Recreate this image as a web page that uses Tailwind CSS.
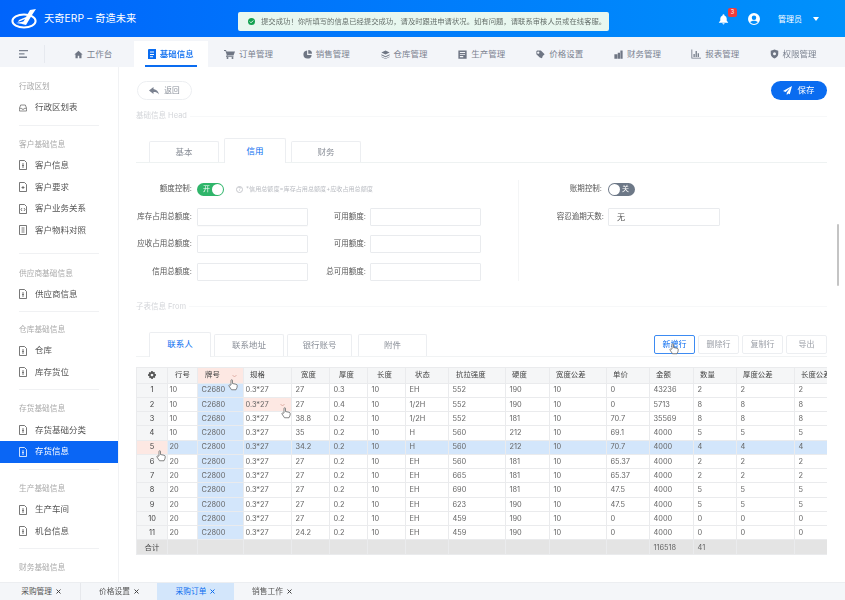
<!DOCTYPE html>
<html lang="zh">
<head>
<meta charset="utf-8">
<title>天奇ERP</title>
<script src="https://cdn.jsdelivr.net/npm/@tailwindcss/browser@4"></script>
</head>
<body class="bg-white">
<div class="relative w-[845px] h-[600px] overflow-hidden flex flex-col blur-[0.3px] font-['Inter','Noto_Sans_CJK_SC',sans-serif] text-[#555]">

  <!-- header -->
  <header class="h-[37px] shrink-0 flex items-center bg-gradient-to-r from-[#0064fb] to-[#0091fb] text-white">
    <svg class="ml-[11px] w-[26px] h-[20px]" viewBox="0 0 26 20" fill="none">
      <ellipse cx="13" cy="12" rx="11.6" ry="6.6" stroke="white" stroke-width="2"/>
      <path d="M19 1 L25 0 L21 6 L15 16 L11 15 L14 10 L7 13 L8 11 L15 8 Z" fill="white"/>
      <path d="M5 14 L15 12 L12 15 Z" fill="white"/>
    </svg>
    <span class="ml-[7px] text-[10.2px] tracking-[0.1px]">天奇ERP – 奇造未来</span>
    <div class="ml-auto flex items-center">
      <svg class="w-[11px] h-[12px]" viewBox="0 0 24 24" fill="white"><path d="M12 1.5a2 2 0 0 0-2 2v.6A7 7 0 0 0 5 11v5l-3 3v1h20v-1l-3-3v-5a7 7 0 0 0-5-6.900V3.500a2 2 0 0 0-2-2zM9.500 21.500a2.500 2.500 0 0 0 5 0z"/></svg>
      <svg class="ml-[19px] w-[12px] h-[12px]" viewBox="0 0 24 24" fill="white"><path d="M12 0a12 12 0 1 0 0 24 12 12 0 0 0 0-24zm0 5a4.500 4.500 0 1 1 0 9 4.500 4.500 0 0 1 0-9zm0 17a9.800 9.800 0 0 1-7.500-3.500c1.200-2 4.300-3 7.500-3s6.300 1 7.500 3A9.800 9.800 0 0 1 12 22z"/></svg>
      <span class="ml-[18px] text-[8px]">管理员</span>
      <span class="ml-[11px] mr-[26px] w-0 h-0 border-x-[3.5px] border-x-transparent border-t-[4px] border-t-white"></span>
    </div>
  </header>

  <!-- nav -->
  <nav class="h-[30px] shrink-0 flex bg-[#f3f5f9] text-[8.5px] text-[#7b8290]">
    <div class="w-[45px] h-[18px] mt-[8px] flex items-center justify-center border-r border-[#e6e9ef] pl-[3px]">
      <svg class="w-[9px] h-[8px]" viewBox="0 0 9 8" fill="#7b8290"><path d="M0 0h9v1.300H0zM0 3.300h5.500v1.300H0zM0 6.600h8v1.300H0z"/></svg>
    </div>
    <div class="ml-[9px] flex pt-[4px]">
      <a class="w-[77.800px] flex items-center justify-center gap-[4px]"><svg class="w-[9px] h-[9px]" viewBox="0 0 24 24" fill="#6f7684"><path d="M12 2 1 12h3v10h6v-7h4v7h6V12h3z"/></svg>工作台</a>
      <a class="relative w-[74px] mx-[1.900px] bg-white flex items-center justify-center gap-[4px] text-[#0a6cf0] font-medium"><svg class="w-[8px] h-[10px]" viewBox="0 0 8 10" fill="#0a6cf0"><path fill-rule="evenodd" d="M1 0h7v10H0V1a1 1 0 0 1 1-1zm1 2.500v1h4v-1zm0 2.500v1h4V5zm0 2.300v.9h3v-.9z"/></svg>基础信息<span class="absolute left-[11px] right-[11px] bottom-0 h-[2px] bg-[#0a6cf0]"></span></a>
      <a class="w-[77.800px] flex items-center justify-center gap-[4px]"><svg class="w-[11px] h-[9px]" viewBox="0 0 22 18" fill="#6f7684"><path d="M0 0h4l1 3h17l-3 8H7l-.5 1.500H19V14H4l1.500-4L3 2H0z"/><circle cx="7" cy="16" r="2"/><circle cx="17" cy="16" r="2"/></svg>订单管理</a>
      <a class="w-[77.800px] flex items-center justify-center gap-[4px]"><svg class="w-[9px] h-[9px]" viewBox="0 0 24 24" fill="#6f7684"><path d="M11 1a11 11 0 1 0 12 12H11z"/><path d="M14 0v10h10A10 10 0 0 0 14 0z"/></svg>销售管理</a>
      <a class="w-[77.800px] flex items-center justify-center gap-[4px]"><svg class="w-[9px] h-[9px]" viewBox="0 0 24 24" fill="#6f7684"><path d="M12 1 1 6.500 12 12l11-5.500zM1 11l11 5.500L23 11v3l-11 5.500L1 14zM1 17l11 5.500L23 17v1.500L12 24 1 18.500z"/></svg>仓库管理</a>
      <a class="w-[77.800px] flex items-center justify-center gap-[4px]"><svg class="w-[9px] h-[9px]" viewBox="0 0 24 24" fill="#6f7684"><path fill-rule="evenodd" d="M1 1h22v22H1zm4 4v3h14V5zm0 6v2h14v-2zm0 5v3h9v-3z"/></svg>生产管理</a>
      <a class="w-[77.800px] flex items-center justify-center gap-[4px]"><svg class="w-[9px] h-[9px]" viewBox="0 0 24 24" fill="#6f7684"><path fill-rule="evenodd" d="M3 1h10l10 10-5 5-2 6-6-2L1 11V3zm3 3a3 3 0 1 0 .010 0z"/></svg>价格设置</a>
      <a class="w-[77.800px] flex items-center justify-center gap-[4px]"><svg class="w-[9px] h-[9px]" viewBox="0 0 24 24" fill="#6f7684"><path d="M1 11h8v12H1zM10 7h6v16h-6zM17 1h6v22h-6z"/></svg>财务管理</a>
      <a class="w-[77.800px] flex items-center justify-center gap-[4px]"><svg class="w-[10px] h-[10px]" viewBox="0 0 24 24" fill="#6f7684"><path d="M1 1h2v20h21v2H1zM6 12h3v7H6zM11 5h3v14h-3zM16 10h3v9h-3z"/></svg>报表管理</a>
      <a class="w-[77.800px] flex items-center justify-center gap-[4px]"><svg class="w-[9px] h-[10px]" viewBox="0 0 24 24" fill="#6f7684"><path fill-rule="evenodd" d="M12 0 2 3v9c0 6 5 10 10 12 5-2 10-6 10-12V3zm0 7a4 4 0 1 1 0 8 4 4 0 0 1 0-8z"/></svg>权限管理</a>
    </div>
  </nav>

  <!-- body -->
  <div class="flex-1 min-h-0 flex">
    <!-- sidebar -->
    <aside class="w-[119px] shrink-0 border-r border-[#f1f2f4] overflow-hidden text-[8.5px] text-[#555] pt-[10px]">
      <div class="h-[20px] pl-[19px] flex items-center text-[7.700px] text-[#aaa]">行政区划</div>
      <a class="h-[21.600px] pl-[19px] flex items-center gap-[8px]"><svg class="w-[8px] h-[8px]" viewBox="0 0 12 12" fill="none" stroke="#555"><path d="M.6 6.500 2.500 1.500h7l1.900 5V10.500H.6zM.6 6.500h3.200l.7 1.300h3l.7-1.300h3.200"/></svg>行政区划表</a>
      <div class="mx-[19px] mt-[6px] mb-[9px] h-px bg-[#f0f1f3]"></div>

      <div class="h-[20px] pl-[19px] flex items-center text-[7.700px] text-[#aaa]">客户基础信息</div>
      <a class="h-[21.600px] pl-[19px] flex items-center gap-[8px]"><svg class="w-[8px] h-[10px]" viewBox="0 0 8 10" fill="none" stroke="#555" stroke-width=".8"><path d="M.5.500h5l2 2v7h-7zM3 4h2M3 5.500h2M3 7h2"/></svg>客户信息</a>
      <a class="h-[21.600px] pl-[19px] flex items-center gap-[8px]"><svg class="w-[8px] h-[10px]" viewBox="0 0 8 10" fill="none" stroke="#555" stroke-width=".8"><path d="M.5.500h5l2 2v7h-7zM4 4v3M2.500 5.500h3"/></svg>客户要求</a>
      <a class="h-[21.600px] pl-[19px] flex items-center gap-[8px]"><svg class="w-[8px] h-[10px]" viewBox="0 0 8 10" fill="none" stroke="#555" stroke-width=".8"><path d="M.5.500h5l2 2v7h-7zM3 4 2 5.500 3 7M5 4l1 1.500L5 7"/></svg>客户业务关系</a>
      <a class="h-[21.600px] pl-[19px] flex items-center gap-[8px]"><svg class="w-[8px] h-[10px]" viewBox="0 0 8 10" fill="none" stroke="#555" stroke-width=".8"><path d="M.5.500h7v9h-7zM2.500 3h3M2.500 5h3M2.500 7h3"/></svg>客户物料对照</a>
      <div class="mx-[19px] mt-[12px] mb-[9.500px] h-px bg-[#f0f1f3]"></div>

      <div class="h-[20px] pl-[19px] flex items-center text-[7.700px] text-[#aaa]">供应商基础信息</div>
      <a class="h-[21.600px] pl-[19px] flex items-center gap-[8px]"><svg class="w-[8px] h-[10px]" viewBox="0 0 8 10" fill="none" stroke="#555" stroke-width=".8"><path d="M.5.500h5l2 2v7h-7zM3 4h2M3 5.500h2M3 7h2"/></svg>供应商信息</a>
      <div class="mx-[19px] mt-[6px] mb-[8px] h-px bg-[#f0f1f3]"></div>

      <div class="h-[20px] pl-[19px] flex items-center text-[7.700px] text-[#aaa]">仓库基础信息</div>
      <a class="h-[21.600px] pl-[19px] flex items-center gap-[8px]"><svg class="w-[8px] h-[10px]" viewBox="0 0 8 10" fill="none" stroke="#555" stroke-width=".8"><path d="M.5.500h5l2 2v7h-7zM3 4h2M3 5.500h2M3 7h2"/></svg>仓库</a>
      <a class="h-[21.600px] pl-[19px] flex items-center gap-[8px]"><svg class="w-[8px] h-[10px]" viewBox="0 0 8 10" fill="none" stroke="#555" stroke-width=".8"><path d="M.5.500h5l2 2v7h-7zM3 4h2M3 5.500h2M3 7h2"/></svg>库存货位</a>
      <div class="mx-[19px] mt-[6px] mb-[9px] h-px bg-[#f0f1f3]"></div>

      <div class="h-[20px] pl-[19px] flex items-center text-[7.700px] text-[#aaa]">存货基础信息</div>
      <a class="h-[21.600px] pl-[19px] flex items-center gap-[8px]"><svg class="w-[8px] h-[10px]" viewBox="0 0 8 10" fill="none" stroke="#555" stroke-width=".8"><path d="M.5.500h5l2 2v7h-7zM3 4h2M3 5.500h2M3 7h2"/></svg>存货基础分类</a>
      <a class="h-[22px] pl-[19px] flex items-center gap-[8px] bg-[#0a66f5] text-white"><svg class="w-[8px] h-[10px]" viewBox="0 0 8 10" fill="none" stroke="white" stroke-width=".8"><path d="M.5.500h5l2 2v7h-7zM3 4h2M3 5.500h2M3 7h2"/></svg>存货信息</a>
      <div class="mx-[19px] mt-[6px] mb-[9px] h-px bg-[#f0f1f3]"></div>

      <div class="h-[20px] pl-[19px] flex items-center text-[7.700px] text-[#aaa]">生产基础信息</div>
      <a class="h-[21.600px] pl-[19px] flex items-center gap-[8px]"><svg class="w-[8px] h-[10px]" viewBox="0 0 8 10" fill="none" stroke="#555" stroke-width=".8"><path d="M.5.500h5l2 2v7h-7zM3 4h2M3 5.500h2M3 7h2"/></svg>生产车间</a>
      <a class="h-[21.600px] pl-[19px] flex items-center gap-[8px]"><svg class="w-[8px] h-[10px]" viewBox="0 0 8 10" fill="none" stroke="#555" stroke-width=".8"><path d="M.5.500h5l2 2v7h-7zM3 4h2M3 5.500h2M3 7h2"/></svg>机台信息</a>
      <div class="mx-[19px] mt-[6px] mb-[9px] h-px bg-[#f0f1f3]"></div>

      <div class="h-[20px] pl-[19px] flex items-center text-[7.700px] text-[#aaa]">财务基础信息</div>
    </aside>

    <!-- main -->
    <main class="flex-1 min-w-0 overflow-hidden pt-[14px] pl-[17px] pr-[18px]">
      <div class="flex justify-between h-[19px]">
        <button class="ml-px w-[55px] rounded-full border border-[#eceef1] flex items-center justify-center gap-[5px] text-[7.700px] text-[#8a909a]"><svg class="w-[10px] h-[8px]" viewBox="0 0 20 16" fill="#7b8290"><path d="M9 0 0 7l9 7v-4c5 0 8 1 11 5-1-6-5-10-11-11z"/></svg>返回</button>
        <button class="w-[56px] rounded-full bg-[#0a6cf0] flex items-center justify-center gap-[5px] text-[8.500px] text-white"><svg class="w-[9px] h-[9px]" viewBox="0 0 24 24" fill="white"><path d="M24 0 0 13l7 3 12-11-9 13v6l4-4 4 2z"/></svg>保存</button>
      </div>

      <div class="mt-[11px] h-[10px] flex items-center gap-[3px] text-[7.500px] text-[#d4d6da]"><span>基础信息 Head</span><span class="flex-1 h-px bg-[#f7f8f9]"></span></div>

      <!-- tabs 1 -->
      <div class="mt-[17px] h-[25px] flex items-end pl-[13px] gap-[5px] border-b border-[#eef2f2] text-[8.500px] text-[#8a8f98]">
        <div class="w-[70px] h-[21px] flex items-center justify-center border border-b-0 border-[#eceef1] rounded-t-[2px]">基本</div>
        <div class="relative top-px w-[62px] h-[25px] flex items-center justify-center border border-b-0 border-[#eceef1] rounded-t-[2px] bg-white text-[#0a6cf0]">信用</div>
        <div class="w-[70px] h-[21px] flex items-center justify-center border border-b-0 border-[#eceef1] rounded-t-[2px]">财务</div>
      </div>

      <!-- form -->
      <div class="mt-[17px] flex text-[7.500px] text-[#555]">
        <div class="w-[383px] shrink-0 border-r border-[#f4f5f6] flex flex-col gap-[9.500px]">
          <div class="h-[18px] flex items-center">
            <label class="w-[56px] text-right">额度控制:</label>
            <span class="ml-[5px] w-[27px] h-[13px] rounded-full bg-[#2fb56a] flex items-center justify-between pl-[6px] pr-[1px] text-[7px] text-white">开<span class="w-[11px] h-[11px] rounded-full bg-white"></span></span>
            <span class="ml-[12px] w-[7px] h-[7px] rounded-full border border-[#c4c6cb] flex items-center justify-center text-[5px] leading-none text-[#b9bcc2]">?</span>
            <span class="ml-[3px] text-[6.100px] text-[#b9bcc2]">*信用总额度=库存占用总额度+应收占用总额度</span>
          </div>
          <div class="h-[18px] flex items-center">
            <label class="w-[56px] text-right whitespace-nowrap">库存占用总额度:</label>
            <input class="ml-[5px] w-[111px] h-[18px] border border-[#e9ebee] rounded-[1px] shadow-[0_1px_1px_rgba(0,0,0,0.02)]">
            <label class="w-[58px] text-right whitespace-nowrap">可用额度:</label>
            <input class="ml-[4px] w-[111px] h-[18px] border border-[#e9ebee] rounded-[1px]">
          </div>
          <div class="h-[18px] flex items-center">
            <label class="w-[56px] text-right whitespace-nowrap">应收占用总额度:</label>
            <input class="ml-[5px] w-[111px] h-[18px] border border-[#e9ebee] rounded-[1px]">
            <label class="w-[58px] text-right whitespace-nowrap">可用额度:</label>
            <input class="ml-[4px] w-[111px] h-[18px] border border-[#e9ebee] rounded-[1px]">
          </div>
          <div class="h-[18px] flex items-center">
            <label class="w-[56px] text-right whitespace-nowrap">信用总额度:</label>
            <input class="ml-[5px] w-[111px] h-[18px] border border-[#e9ebee] rounded-[1px]">
            <label class="w-[58px] text-right whitespace-nowrap">总可用额度:</label>
            <input class="ml-[4px] w-[111px] h-[18px] border border-[#e9ebee] rounded-[1px]">
          </div>
        </div>
        <div class="flex-1 flex flex-col gap-[9.500px]">
          <div class="h-[18px] flex items-center">
            <label class="w-[83px] text-right">账期控制:</label>
            <span class="ml-[6px] w-[27px] h-[13px] rounded-full bg-[#6d7887] flex items-center pl-[1px] text-[7px] text-white gap-[2px]"><span class="w-[11px] h-[11px] rounded-full bg-white"></span>关</span>
          </div>
          <div class="h-[18px] flex items-center">
            <label class="w-[85px] text-right whitespace-nowrap">容忍逾期天数:</label>
            <input value="无" class="ml-[4px] w-[112px] h-[18px] border border-[#e9ebee] rounded-[1px] pl-[8px] text-[8px] text-[#555]">
          </div>
        </div>
      </div>

      <div class="mt-[21px] h-[10px] flex items-center gap-[3px] text-[7.500px] text-[#d4d6da]"><span>子表信息 From</span><span class="flex-1 h-px bg-[#f7f8f9]"></span></div>

      <!-- tabs 2 -->
      <div class="mt-[20px] h-[25px] flex items-end pl-[13px] border-b border-[#f1f3f4] text-[8.500px] text-[#8a8f98]">
        <div class="relative top-px w-[62px] h-[25px] flex items-center justify-center border border-b-0 border-[#eceef1] rounded-t-[2px] bg-white text-[#0a6cf0]">联系人</div>
        <div class="ml-[3px] w-[70px] h-[22px] flex items-center justify-center border border-b-0 border-[#eceef1] rounded-t-[2px]">联系地址</div>
        <div class="ml-[3px] w-[65px] h-[22px] flex items-center justify-center border border-b-0 border-[#eceef1] rounded-t-[2px]">银行账号</div>
        <div class="ml-[6px] w-[69px] h-[22px] flex items-center justify-center border border-b-0 border-[#eceef1] rounded-t-[2px]">附件</div>
        <div class="ml-auto self-start mt-[3px] flex gap-[3px] text-[8px] text-[#9a9ea6]">
          <button class="w-[41px] h-[19px] border border-[#3d8bf2] rounded-[2px] text-[#0a6cf0]">新增行</button>
          <button class="w-[41px] h-[19px] border border-[#eceef1] rounded-[2px]">删除行</button>
          <button class="w-[41px] h-[19px] border border-[#eceef1] rounded-[2px]">复制行</button>
          <button class="w-[41px] h-[19px] border border-[#eceef1] rounded-[2px]">导出</button>
        </div>
      </div>

      <!-- table -->
      <div class="mt-[10px] w-[691px] overflow-hidden">
        <table class="table-fixed w-[691px] border-collapse [font-feature-settings:'calt'_0] text-[7.400px] leading-none text-[#666] [&_td]:h-[14.270px] [&_td]:p-0 [&_td]:pl-[3.500px] [&_td]:border [&_td]:border-[#eaebed] [&_td]:whitespace-nowrap [&_td]:overflow-hidden [&_th]:h-[16px] [&_th]:p-0 [&_th]:pl-[7px] [&_th]:border [&_th]:border-[#eaebed] [&_th]:bg-[#f5f6f7] [&_th]:text-left [&_th]:font-normal [&_th]:text-[#444] [&_th]:whitespace-nowrap [&_th]:overflow-hidden [&_td:first-child]:bg-[#f5f6f7] [&_td:first-child]:pl-0 [&_td:first-child]:text-center [&_td:first-child]:text-[#444] [&_td:nth-child(2)]:pl-[1.500px] [&_td:nth-child(4)]:pl-[1.500px] [&_td:nth-child(3)]:bg-[#d3e6fb]">
          <colgroup>
            <col class="w-[31px]"><col class="w-[30px]"><col class="w-[46px]"><col class="w-[48px]"><col class="w-[38px]"><col class="w-[38px]"><col class="w-[38px]"><col class="w-[43px]"><col class="w-[57px]"><col class="w-[44px]"><col class="w-[57px]"><col class="w-[43px]"><col class="w-[44px]"><col class="w-[43px]"><col class="w-[58px]"><col class="w-[60px]">
          </colgroup>
          <thead>
            <tr>
              <th class="pl-[11px]!"><svg class="w-[8px] h-[8px]" viewBox="0 0 24 24" fill="#555"><path fill-rule="evenodd" d="M10 0h4l1 3.500 3-1.500 3 3-1.500 3L24 10v4l-3.500 1 1.500 3-3 3-3-1.500L14 24h-4l-1-3.500L6 22l-3-3 1.500-3L0 14v-4l3.500-1L2 6l3-3 3 1.500zM12 8a4 4 0 1 0 .010 0z"/></svg></th>
              <th>行号</th>
              <th class="bg-[#fde8e3]! relative">牌号<svg class="absolute right-[6px] top-[6px] w-[5px] h-[4px]" viewBox="0 0 10 6" fill="none" stroke="#d08f85" stroke-width="1.200"><path d="m1 1 4 4 4-4"/></svg></th>
              <th class="pl-[6px]!">规格</th><th class="pl-[9px]!">宽度</th><th class="pl-[9px]!">厚度</th><th class="pl-[9px]!">长度</th><th class="pl-[9px]!">状态</th><th>抗拉强度</th><th class="pl-[6px]!">硬度</th><th class="pl-[6px]!">宽度公差</th><th class="pl-[6px]!">单价</th><th class="pl-[6px]!">金额</th><th class="pl-[6px]!">数量</th><th class="pl-[6px]!">厚度公差</th><th class="pl-[6px]!">长度公差</th>
            </tr>
          </thead>
          <tbody>
            <tr><td>1</td><td>10</td><td>C2680</td><td>0.3*27</td><td>27</td><td>0.3</td><td>10</td><td>EH</td><td>552</td><td>190</td><td>10</td><td>0</td><td>43236</td><td>2</td><td>2</td><td>2</td></tr>
            <tr><td>2</td><td>10</td><td>C2680</td><td class="bg-[#fde8e3] relative">0.3*27<svg class="absolute right-[6px] top-[5px] w-[5px] h-[4px]" viewBox="0 0 10 6" fill="none" stroke="#d08f85" stroke-width="1.200"><path d="m1 1 4 4 4-4"/></svg></td><td>27</td><td>0.4</td><td>10</td><td>1/2H</td><td>552</td><td>190</td><td>10</td><td>0</td><td>5713</td><td>8</td><td>8</td><td>8</td></tr>
            <tr><td>3</td><td>10</td><td>C2680</td><td>0.3*27</td><td>38.8</td><td>0.2</td><td>10</td><td>1/2H</td><td>552</td><td>181</td><td>10</td><td>70.7</td><td>35569</td><td>8</td><td>8</td><td>8</td></tr>
            <tr><td>4</td><td>10</td><td>C2800</td><td>0.3*27</td><td>35</td><td>0.2</td><td>10</td><td>H</td><td>560</td><td>212</td><td>10</td><td>69.1</td><td>4000</td><td>5</td><td>5</td><td>5</td></tr>
            <tr class="bg-[#d3e6fb]"><td class="bg-[#fde8e3]!">5</td><td>20</td><td>C2800</td><td>0.3*27</td><td>34.2</td><td>0.2</td><td>10</td><td>H</td><td>560</td><td>212</td><td>10</td><td>70.7</td><td>4000</td><td>4</td><td>4</td><td>4</td></tr>
            <tr><td>6</td><td>20</td><td>C2800</td><td>0.3*27</td><td>27</td><td>0.2</td><td>10</td><td>EH</td><td>560</td><td>181</td><td>10</td><td>65.37</td><td>4000</td><td>2</td><td>2</td><td>2</td></tr>
            <tr><td>7</td><td>20</td><td>C2800</td><td>0.3*27</td><td>27</td><td>0.2</td><td>10</td><td>EH</td><td>665</td><td>181</td><td>10</td><td>65.37</td><td>4000</td><td>2</td><td>2</td><td>2</td></tr>
            <tr><td>8</td><td>20</td><td>C2800</td><td>0.3*27</td><td>27</td><td>0.2</td><td>10</td><td>EH</td><td>690</td><td>181</td><td>10</td><td>47.5</td><td>4000</td><td>5</td><td>5</td><td>5</td></tr>
            <tr><td>9</td><td>20</td><td>C2800</td><td>0.3*27</td><td>27</td><td>0.2</td><td>10</td><td>EH</td><td>623</td><td>190</td><td>10</td><td>47.5</td><td>4000</td><td>5</td><td>5</td><td>5</td></tr>
            <tr><td>10</td><td>20</td><td>C2800</td><td>0.3*27</td><td>27</td><td>0.2</td><td>10</td><td>EH</td><td>459</td><td>190</td><td>10</td><td>0</td><td>4000</td><td>0</td><td>0</td><td>0</td></tr>
            <tr><td>11</td><td>20</td><td>C2800</td><td>0.3*27</td><td>24.2</td><td>0.2</td><td>10</td><td>EH</td><td>459</td><td>190</td><td>10</td><td>0</td><td>4000</td><td>0</td><td>0</td><td>0</td></tr>
            <tr class="bg-[#e4e4e4] [&_td]:border-[#dedede] [&_td]:h-[15px]"><td class="bg-[#e4e4e4]! text-[#444]">合计</td><td></td><td class="bg-[#e4e4e4]!"></td><td></td><td></td><td></td><td></td><td></td><td></td><td></td><td></td><td></td><td>116518</td><td>41</td><td></td><td></td></tr>
          </tbody>
        </table>
      </div>
    </main>
  </div>

  <!-- bottom tabs -->
  <footer class="h-[18px] shrink-0 flex items-center bg-[#f4f6f9] border-t border-[#eceef1] text-[7.700px] text-[#555]">
    <a class="w-[81px] h-full flex items-center justify-end pr-[19px] gap-[4px] border-r border-[#e6e8ec]">采购管理<svg class="w-[5px] h-[5px]" viewBox="0 0 10 10" stroke="#444" stroke-width="2"><path d="m1 1 8 8M9 1l-8 8"/></svg></a>
    <a class="w-[76px] h-full flex items-center justify-center gap-[4px]">价格设置<svg class="w-[5px] h-[5px]" viewBox="0 0 10 10" stroke="#444" stroke-width="2"><path d="m1 1 8 8M9 1l-8 8"/></svg></a>
    <a class="w-[77px] h-full flex items-center justify-center gap-[4px] bg-[#d3e6fb] text-[#0a6cf0]">采购订单<svg class="w-[5px] h-[5px]" viewBox="0 0 10 10" stroke="#0a6cf0" stroke-width="2"><path d="m1 1 8 8M9 1l-8 8"/></svg></a>
    <a class="w-[76px] h-full flex items-center justify-center gap-[4px]">销售工作<svg class="w-[5px] h-[5px]" viewBox="0 0 10 10" stroke="#444" stroke-width="2"><path d="m1 1 8 8M9 1l-8 8"/></svg></a>
  </footer>

  <!-- overlays -->
  <div class="absolute left-[238px] top-[12px] w-[371px] h-[19px] rounded-[2px] bg-[#e8f7ef] flex items-center pl-[10px] gap-[6px] text-[7.350px] whitespace-nowrap text-[#66706b]">
    <svg class="w-[7px] h-[7px] shrink-0" viewBox="0 0 14 14"><circle cx="7" cy="7" r="7" fill="#12a150"/><path d="m3.500 7 2.500 2.500 4.500-4.500" fill="none" stroke="white" stroke-width="1.800"/></svg>
    提交成功！你所填写的信息已经提交成功，请及时跟进申请状况。如有问题，请联系审核人员或在线客服。
  </div>
  <span class="absolute left-[728px] top-[8px] w-[9px] h-[9px] rounded-[2px] bg-[#ef3d3d] text-white text-[5.500px] flex items-center justify-center">3</span>
  <div class="absolute right-[6px] top-[224px] w-[2px] h-[62px] rounded-full bg-[#c4c4c4]"></div>

  <svg class="absolute left-[228px] top-[379px] w-[10px] h-[12px]" viewBox="0 0 20 24" fill="white" stroke="#555" stroke-width="1.400"><path d="M6 12V3a1.500 1.500 0 0 1 3 0v6l7 1.500c1.500.3 2.500 1.300 2.500 3 0 3-1 5-2.500 8H7L2 14c-.8-1.500 1-3 2.500-1.500z"/></svg>
  <svg class="absolute left-[281px] top-[407px] w-[10px] h-[12px]" viewBox="0 0 20 24" fill="white" stroke="#555" stroke-width="1.400"><path d="M6 12V3a1.500 1.500 0 0 1 3 0v6l7 1.500c1.500.3 2.500 1.300 2.500 3 0 3-1 5-2.500 8H7L2 14c-.8-1.500 1-3 2.500-1.500z"/></svg>
  <svg class="absolute left-[156px] top-[450px] w-[10px] h-[12px]" viewBox="0 0 20 24" fill="white" stroke="#555" stroke-width="1.400"><path d="M6 12V3a1.500 1.500 0 0 1 3 0v6l7 1.500c1.500.3 2.500 1.300 2.500 3 0 3-1 5-2.500 8H7L2 14c-.8-1.500 1-3 2.500-1.500z"/></svg>
  <svg class="absolute left-[669px] top-[343px] w-[10px] h-[12px]" viewBox="0 0 20 24" fill="white" stroke="#555" stroke-width="1.400"><path d="M6 12V3a1.500 1.500 0 0 1 3 0v6l7 1.500c1.500.3 2.500 1.300 2.500 3 0 3-1 5-2.500 8H7L2 14c-.8-1.500 1-3 2.500-1.500z"/></svg>
</div>
</body>
</html>
